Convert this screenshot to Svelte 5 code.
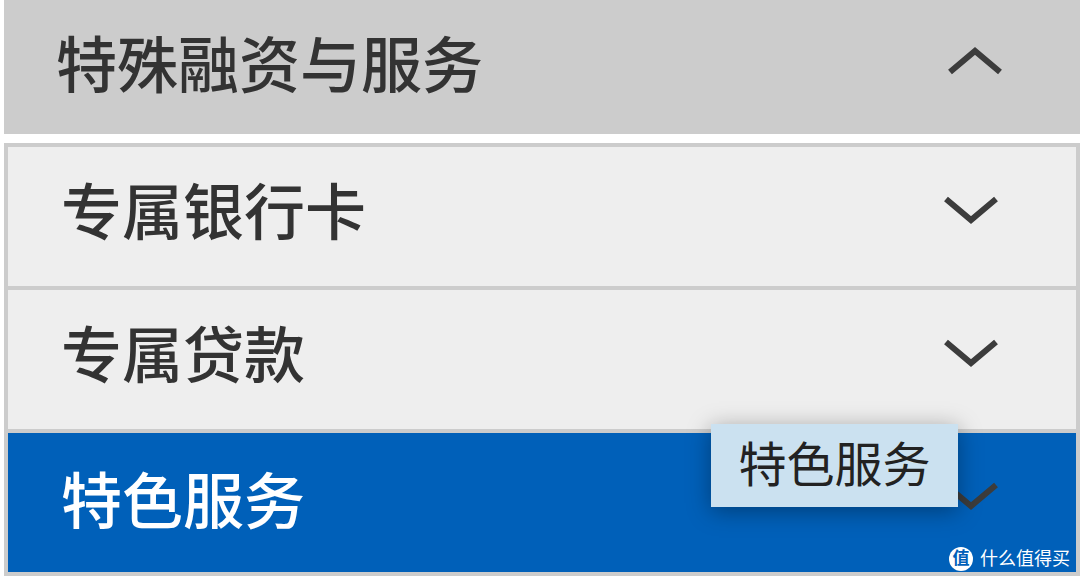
<script>
  const rows = [
    { label: '专属银行卡', active: false },
    { label: '专属贷款', active: false },
    { label: '特色服务', active: true }
  ];
</script>

<div class="page">
  <div class="header">
    <span class="title">特殊融资与服务</span>
    <svg class="chev up" width="56" height="32" viewBox="0 0 56 32"><path d="M3 28 L28 7 L53 28" fill="none" stroke="#3c3c3c" stroke-width="6"/></svg>
  </div>
  <div class="list">
    {#each rows as row}
      <div class="row" class:active={row.active}>
        <span class="label">{row.label}</span>
        <svg class="chev" width="56" height="32" viewBox="0 0 56 32"><path d="M3 5 L28 26 L53 5" fill="none" stroke="#3c3c3c" stroke-width="6"/></svg>
        {#if row.active}
          <div class="tip">特色服务</div>
          <div class="mark">
            <span class="badge">值</span>
            <span class="mark-text">什么值得买</span>
          </div>
        {/if}
      </div>
    {/each}
  </div>
</div>

<style>
  :global(body) {
    margin: 0;
    background: #fff;
    font-family: "Liberation Sans", "Noto Sans CJK SC", sans-serif;
  }
  .page {
    width: 1080px;
    height: 581px;
    padding-left: 4px;
    box-sizing: border-box;
    overflow: hidden;
  }
  .header {
    height: 134px;
    background: #ccc;
    display: flex;
    align-items: center;
    justify-content: space-between;
    padding: 0 77px 0 52px;
    margin-bottom: 9px;
    color: #333;
  }
  .title {
    font-size: 61px;
    line-height: 1;
    font-weight: 500;
    filter: blur(0.7px);
  }
  .header .chev { margin-top: -14px; }
  .list {
    border: 4px solid #ccc;
    height: 425px;
    box-sizing: content-box;
    width: 1068px;
    display: flex;
    flex-direction: column;
    gap: 4px;
    background: #ccc;
  }
  .row {
    position: relative;
    flex: 1;
    background: #eee;
    color: #333;
    display: flex;
    align-items: center;
    justify-content: space-between;
    padding: 0 77px 0 53px;
  }
  .label {
    font-size: 61px;
    line-height: 1;
    font-weight: 500;
    filter: blur(0.7px);
    margin-top: -4px;
  }
  .row .chev { margin-top: -14px; }
  .row.active {
    background: #0060b9;
    color: #fff;
  }
  .row.active .label { margin-top: 2px; }
  .row.active .chev { margin-top: -13px; }
  .tip {
    position: absolute;
    left: 703px;
    top: -9px;
    width: 247px;
    height: 83px;
    background: #cbe1f0;
    color: #222;
    font-size: 48px;
    line-height: 83px;
    text-align: center;
    box-shadow: 0 4px 22px rgba(0, 0, 0, 0.35);
  }
  .mark {
    position: absolute;
    right: 6px;
    bottom: 1px;
    display: flex;
    align-items: center;
    gap: 7px;
    color: #fff;
  }
  .badge {
    width: 24px;
    height: 24px;
    border-radius: 50%;
    background: #fff;
    color: #0060b9;
    font-size: 17px;
    line-height: 24px;
    text-align: center;
    font-weight: 700;
  }
  .mark-text {
    font-size: 18px;
    line-height: 24px;
  }
</style>
